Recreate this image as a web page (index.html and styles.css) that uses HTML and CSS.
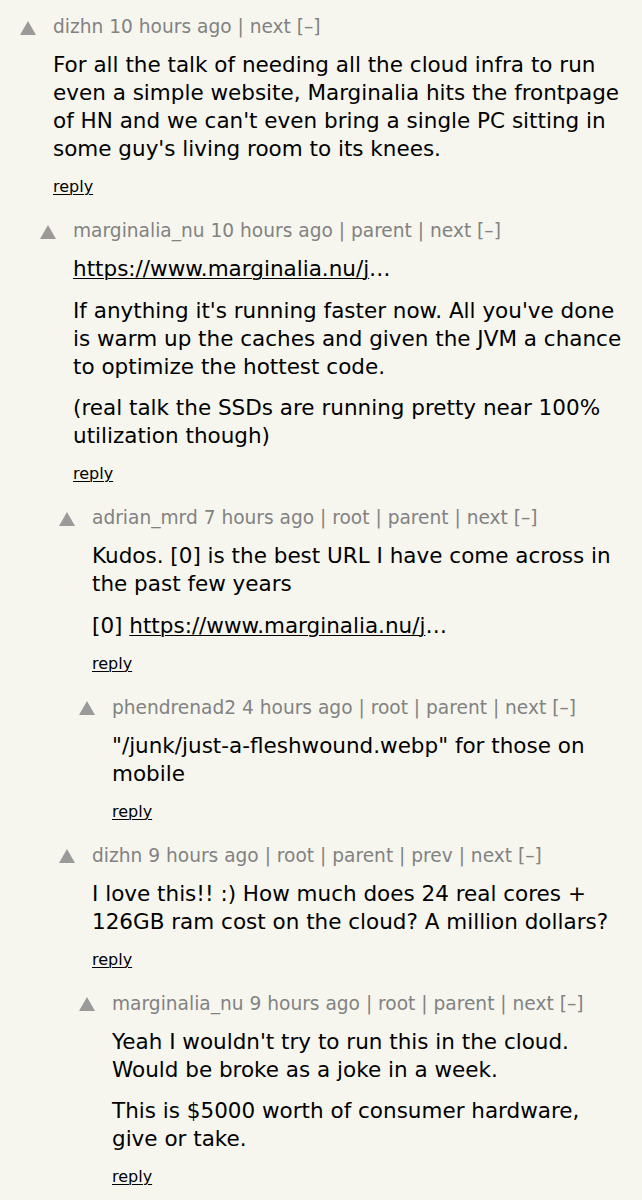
FILE: index.html
```html
<!DOCTYPE html>
<html lang="en">
<head>
<meta charset="utf-8">
<title>Comments</title>
<link rel="stylesheet" href="styles.css">
</head>
<body>
<div class="thread">

  <div class="comment level-0">
    <div class="vote"><span class="arrow"></span></div>
    <div class="content">
      <div class="meta"><a class="user">dizhn</a> <span class="age">10 hours ago</span> | <a>next</a> <a class="toggle">[–]</a></div>
      <div class="text">
        <p>For all the talk of needing all the cloud infra to run even a simple website, Marginalia hits the frontpage of HN and we can't even bring a single PC sitting in some guy's living room to its knees.</p>
      </div>
      <div class="reply"><a>reply</a></div>
    </div>
  </div>

  <div class="comment level-1">
    <div class="vote"><span class="arrow"></span></div>
    <div class="content">
      <div class="meta"><a class="user">marginalia_nu</a> <span class="age">10 hours ago</span> | <a>parent</a> | <a>next</a> <a class="toggle">[–]</a></div>
      <div class="text">
        <p><a class="link">https://www.marginalia.nu/j</a>…</p>
        <p>If anything it's running faster now. All you've done is warm up the caches and given the JVM a chance to optimize the hottest code.</p>
        <p>(real talk the SSDs are running pretty near 100% utilization though)</p>
      </div>
      <div class="reply"><a>reply</a></div>
    </div>
  </div>

  <div class="comment level-2">
    <div class="vote"><span class="arrow"></span></div>
    <div class="content">
      <div class="meta"><a class="user">adrian_mrd</a> <span class="age">7 hours ago</span> | <a>root</a> | <a>parent</a> | <a>next</a> <a class="toggle">[–]</a></div>
      <div class="text">
        <p>Kudos. [0] is the best URL I have come across in the past few years</p>
        <p>[0] <a class="link">https://www.marginalia.nu/j</a>…</p>
      </div>
      <div class="reply"><a>reply</a></div>
    </div>
  </div>

  <div class="comment level-3">
    <div class="vote"><span class="arrow"></span></div>
    <div class="content">
      <div class="meta"><a class="user">phendrenad2</a> <span class="age">4 hours ago</span> | <a>root</a> | <a>parent</a> | <a>next</a> <a class="toggle">[–]</a></div>
      <div class="text">
        <p>"/junk/just-a-fleshwound.webp" for those on mobile</p>
      </div>
      <div class="reply"><a>reply</a></div>
    </div>
  </div>

  <div class="comment level-2">
    <div class="vote"><span class="arrow"></span></div>
    <div class="content">
      <div class="meta"><a class="user">dizhn</a> <span class="age">9 hours ago</span> | <a>root</a> | <a>parent</a> | <a>prev</a> | <a>next</a> <a class="toggle">[–]</a></div>
      <div class="text">
        <p>I love this!! :) How much does 24 real cores + 126GB ram cost on the cloud? A million dollars?</p>
      </div>
      <div class="reply"><a>reply</a></div>
    </div>
  </div>

  <div class="comment level-3">
    <div class="vote"><span class="arrow"></span></div>
    <div class="content">
      <div class="meta"><a class="user">marginalia_nu</a> <span class="age">9 hours ago</span> | <a>root</a> | <a>parent</a> | <a>next</a> <a class="toggle">[–]</a></div>
      <div class="text">
        <p>Yeah I wouldn't try to run this in the cloud. Would be broke as a joke in a week.</p>
        <p>This is $5000 worth of consumer hardware, give or take.</p>
      </div>
      <div class="reply"><a>reply</a></div>
    </div>
  </div>

</div>
</body>
</html>
```

FILE: styles.css
```css
html, body {
  margin: 0;
  padding: 0;
  background: #f6f6ef;
}

body {
  font-family: "DejaVu Sans", Verdana, sans-serif;
  color: #000;
}

.thread {
  display: flex;
  flex-direction: column;
  gap: 16px;
  padding: 13px 14px 0 20px;
}

.comment {
  display: flex;
  align-items: flex-start;
}

.level-1 { padding-left: 20px; }
.level-2 { padding-left: 39px; }
.level-3 { padding-left: 59px; }

.vote {
  flex: none;
  width: 33px;
  height: 28px;
  display: flex;
  align-items: center;
}

.arrow {
  display: block;
  width: 0;
  height: 0;
  border-left: 8px solid transparent;
  border-right: 8px solid transparent;
  border-bottom: 14px solid #9a9a9a;
  margin-top: 1px;
}

.content {
  flex: 1;
  min-width: 0;
}

.meta {
  font-size: 18.6px;
  line-height: 28px;
  color: #828282;
  white-space: nowrap;
}

.meta a {
  color: #828282;
  text-decoration: none;
}

.text {
  margin-top: 10px;
  font-size: 21.5px;
  line-height: 28px;
  display: flex;
  flex-direction: column;
  gap: 13.5px;
}

.text p {
  margin: 0;
}

.link {
  color: #000;
  text-decoration: underline;
  text-decoration-thickness: 1px;
  text-underline-offset: 2px;
}

.reply {
  margin-top: 10px;
  font-size: 16px;
  line-height: 28px;
}

.reply a {
  color: #000;
  text-decoration: underline;
  text-decoration-thickness: 1px;
  text-underline-offset: 2px;
}
```
